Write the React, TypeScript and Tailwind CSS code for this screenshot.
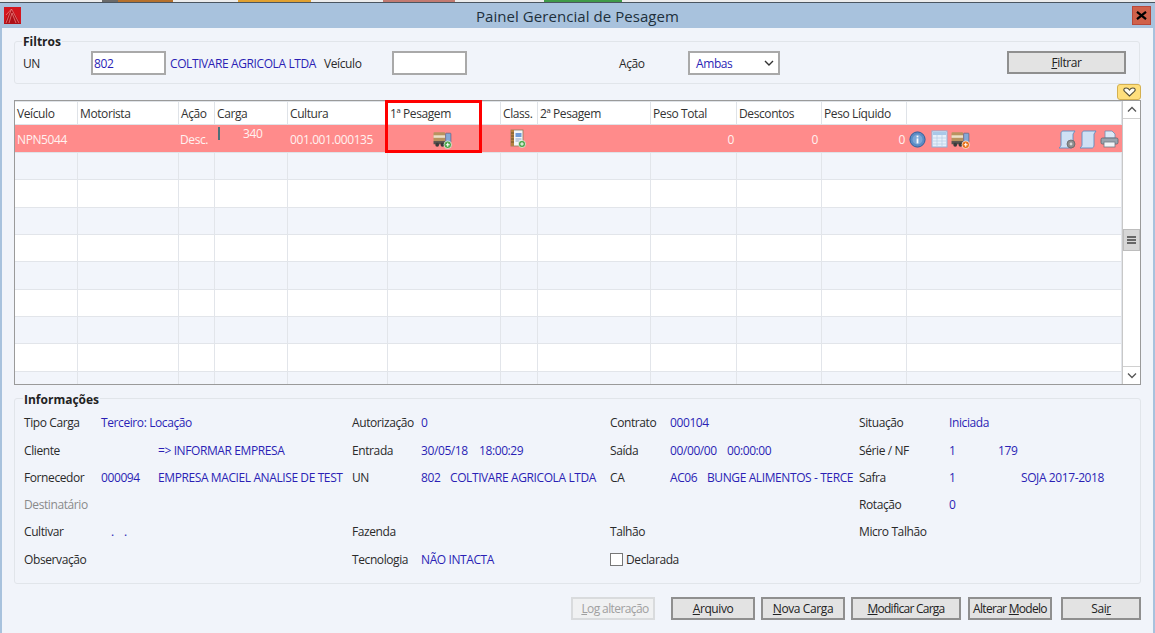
import type { ReactNode } from "react";

const COLS = "grid-cols-[63px_101px_36px_73px_100px_113px_37px_113px_86px_85px_85px_215px]";

const headers = ["Veículo", "Motorista", "Ação", "Carga", "Cultura", "1ª Pesagem", "Class.", "2ª Pesagem", "Peso Total", "Descontos", "Peso Líquido", ""];

function TruckIcon({ badge }: { badge: string }) {
  return (
    <svg width="20" height="19" viewBox="0 0 19 18">
      <rect x="0.5" y="2" width="11" height="9" rx="0.8" fill="#b8935f" />
      <rect x="0.5" y="5" width="11" height="2.4" fill="#ece0c8" />
      <rect x="0.5" y="10.5" width="12" height="3" fill="#55524e" />
      <rect x="12" y="3" width="5" height="9" rx="0.6" fill="#86a8d6" stroke="#4a5f80" strokeWidth="0.6" />
      <circle cx="4" cy="14" r="1.8" fill="#3a3a3a" />
      <circle cx="9" cy="14" r="1.8" fill="#3a3a3a" />
      <circle cx="14" cy="14" r="3.6" fill={badge} stroke="#fff" strokeWidth="0.6" />
      <path d="M12.2 14h3.6M14 12.2v3.6" stroke="#fff" strokeWidth="1" />
    </svg>
  );
}

function ClassIcon() {
  return (
    <svg width="18" height="20" viewBox="0 0 18 20">
      <rect x="2" y="1" width="12" height="16" fill="#f4f6f8" stroke="#8a7a5a" strokeWidth="0.8" />
      <rect x="2" y="1" width="3" height="16" fill="#b5813f" />
      <path d="M2 4h3M2 7h3M2 10h3M2 13h3" stroke="#5e4a28" strokeWidth="0.8" />
      <rect x="6.5" y="4" width="6" height="4" fill="#6f9bd8" />
      <path d="M6.5 10h6M6.5 12h4" stroke="#8ca5c4" strokeWidth="1" />
      <circle cx="13" cy="15" r="3.6" fill="#4da54a" stroke="#fff" strokeWidth="0.6" />
      <path d="M11.2 15h3.6M13 13.2v3.6" stroke="#fff" strokeWidth="1" />
    </svg>
  );
}

function InfoIcon() {
  return (
    <svg width="17" height="17" viewBox="0 0 17 17">
      <circle cx="8.5" cy="8.5" r="7.6" fill="#5b8cc4" stroke="#2f5f9c" strokeWidth="1" />
      <circle cx="8.5" cy="8.5" r="5" fill="#7ba6d6" />
      <rect x="7.6" y="7.4" width="1.8" height="5" fill="#fff" />
      <rect x="7.6" y="4.6" width="1.8" height="1.8" fill="#fff" />
    </svg>
  );
}

function SheetIcon() {
  return (
    <svg width="17" height="18" viewBox="0 0 17 18">
      <rect x="1" y="1" width="15" height="16" fill="#e6f0fa" stroke="#8fb2d8" />
      <rect x="2" y="2" width="13" height="3" fill="#a9c8e8" />
      <path d="M2 8h13M2 11h13M2 14h13M6 5v11M11 5v11" stroke="#b4cce4" strokeWidth="0.7" />
    </svg>
  );
}

function ScrollIcon({ gear }: { gear?: boolean }) {
  return (
    <svg width="18" height="19" viewBox="0 0 18 19">
      <path d="M5 1h12l-2 3v11c0 2-1 3-2 3H1c1-1 2-2 2-3V3c0-1 1-2 2-2z" fill="#cfe0f4" stroke="#5f8cc0" strokeWidth="0.9" />
      {gear && (
        <>
          <circle cx="13" cy="14" r="4" fill="#8d8d8d" stroke="#5e5e5e" strokeWidth="0.7" />
          <circle cx="13" cy="14" r="1.4" fill="#d9d9d9" />
        </>
      )}
    </svg>
  );
}

function PrinterIcon() {
  return (
    <svg width="19" height="18" viewBox="0 0 19 18">
      <path d="M5 1h7l3 3v4H5z" fill="#dce8f5" stroke="#6f8db0" strokeWidth="0.8" />
      <rect x="1" y="8" width="17" height="6" rx="1.5" fill="#9aa4ae" stroke="#5c6670" strokeWidth="0.8" />
      <rect x="4" y="12" width="11" height="5" fill="#f1f4f7" stroke="#6f7a85" strokeWidth="0.8" />
    </svg>
  );
}

function AppLogo() {
  return (
    <svg width="17" height="17" viewBox="0 0 17 17">
      <rect width="17" height="17" fill="#d3161e" />
      <path d="M0 17 7 1l10 16z" fill="#ad1017" />
      <path d="M2 16 7.5 2 15 16M5 16 8 6l4 10M7.5 2 2 8" fill="none" stroke="#f28a8a" strokeWidth="0.7" />
    </svg>
  );
}

function Btn({ children, wide, disabled }: { children: ReactNode; wide: string; disabled?: boolean }) {
  return (
    <div
      className={`${wide} h-[23px] flex items-center justify-center border-2 pt-[1px] ${
        disabled ? "border-[#d9dbdd] bg-[#f0f1f2] text-[#a0a0a0]" : "border-[#8f8f8f] bg-[#e3e3e3] text-[#222]"
      }`}
    >
      {children}
    </div>
  );
}

function Label({ children, muted }: { children?: ReactNode; muted?: boolean }) {
  return <div className={muted ? "text-[#8a8a8a]" : "text-[#2a2a2a]"}>{children}</div>;
}

function Val({ children }: { children?: ReactNode }) {
  return <div className="flex whitespace-nowrap text-[#2b1fb5]">{children}</div>;
}

function InfoRow({ cells }: { cells: ReactNode[] }) {
  return (
    <div className="h-[27.3px] grid grid-cols-[77px_251px_69px_189px_60px_189px_90px_182px] items-center">
      {cells}
    </div>
  );
}

export default function App() {
  return (
    <div className="w-[1155px] h-[633px] overflow-hidden bg-[#f1f4fa] text-[12px] leading-[16px] font-['Open_Sans','Liberation_Sans',sans-serif] tracking-[-0.4px]">
      <div className="h-[3px] flex bg-[#ececec] border-b border-[#4a5560]">
        <div className="ml-[102px] w-[16px] bg-[#6a6a6a]" />
        <div className="w-[55px] bg-[#b5702c]" />
        <div className="ml-[65px] w-[73px] bg-[#e0a030]" />
        <div className="ml-[72px] w-[72px] bg-[#c27a70]" />
        <div className="ml-[89px] w-[78px] bg-[#3f9a48]" />
      </div>
      <div className="h-[25px] bg-[#a8c2dd] flex items-center relative">
        <div className="ml-[4px] flex">
          <AppLogo />
        </div>
        <div className="absolute left-0 right-0 text-center text-[15px] text-[#20303c] tracking-[0.06px]">
          Painel Gerencial de Pesagem
        </div>
        <div className="absolute left-[1132px] top-[3px] w-[19px] h-[19px] bg-[#d0614a] border border-[#b8483a] flex items-center justify-center">
          <svg width="11" height="9" viewBox="0 0 11 9">
            <path d="M1 .8 10 8.2M10 .8 1 8.2" stroke="#000" strokeWidth="2.2" />
          </svg>
        </div>
      </div>

      <div className="border-l-[2px] border-r-[2px] border-[#a8c2dd] pl-[12px] pt-[13px] h-[605px] flex flex-col">
        {/* filtros */}
        <div className="relative w-[1126px] h-[43px] border border-[#e1e5ea] rounded-[3px] flex items-center pl-[8px]">
          <span className="absolute left-[7px] -top-[8px] px-[1px] bg-[#f1f4fa] font-bold text-[#222] tracking-normal">Filtros</span>
          <div className="w-[68px] pt-[2px] text-[#2a2a2a]">UN</div>
          <div className="w-[75px] h-[24px] border-2 border-[#a9a9a9] bg-white flex items-center pl-[1px] pt-[2px] text-[#2b1fb5]">802</div>
          <div className="ml-[4px] w-[154px] pt-[2px] text-[#2b1fb5] whitespace-nowrap">COLTIVARE AGRICOLA LTDA</div>
          <div className="w-[68px] pt-[2px] text-[#2a2a2a]">Veículo</div>
          <div className="w-[75px] h-[24px] border-2 border-[#a9a9a9] bg-white" />
          <div className="ml-[152px] w-[69px] pt-[2px] text-[#2a2a2a]">Ação</div>
          <div className="w-[92px] h-[24px] border-2 border-[#a9a9a9] bg-white flex items-center justify-between pl-[6px] pr-[4px] text-[#2b1fb5]">
            <span className="pt-[2px]">Ambas</span>
            <svg width="10" height="8" viewBox="0 0 10 8">
              <path d="M1 2l4 4 4-4" fill="none" stroke="#333" strokeWidth="1.4" />
            </svg>
          </div>
          <div className="ml-[227px]">
            <Btn wide="w-[119px]">
              <span>
                <u>F</u>iltrar
              </span>
            </Btn>
          </div>
        </div>

        <div className="h-[16px] w-[1127px] flex justify-end">
          <div className="w-[24px] h-[16px] bg-[#ffdf7c] border border-[#d4b050] rounded-[3px] flex items-center justify-center">
            <svg width="13" height="10" viewBox="0 0 12 9">
              <path d="M6 8.2 1.5 4C0 2.5 1 .8 3 .8 4.4.8 5.4 1.6 6 2.6 6.6 1.6 7.6.8 9 .8c2 0 3 1.7 1.5 3.2z" fill="#fffdf4" stroke="#55503a" strokeWidth="1" />
            </svg>
          </div>
        </div>

        {/* grade */}
        <div className="relative w-[1127px] h-[285px] border border-[#9a9a9a] flex">
          <div className="w-[1107px] flex flex-col overflow-hidden">
            <div className={`grid ${COLS} shrink-0 h-[24px] bg-[#dfe3e8] pt-[1px]`}>
              {headers.map((h, i) => (
                <div key={i} className="bg-white mr-[1px] mb-[1px] flex items-center pl-[2px] pt-[1px] text-[#333]">
                  {h}
                </div>
              ))}
            </div>
            <div className={`grid ${COLS} shrink-0 h-[28px] bg-[#ff8b8b] text-[#fff2f0] items-center border-b border-[#dfe3e8]`}>
              <div className="pl-[2px] pt-[3px]">NPN5044</div>
              <div />
              <div className="pl-[1px] pt-[3px]">Desc.</div>
              <div className="h-full flex">
                <div className="ml-[3px] mt-[2px] w-[2px] h-[13px] bg-[#4d7078]" />
                <div className="ml-[23px] mt-[1px]">340</div>
              </div>
              <div className="pl-[2px] pt-[3px]">001.001.000135</div>
              <div className="flex justify-center pr-[3px] pt-[1px]">
                <TruckIcon badge="#4da54a" />
              </div>
              <div className="pl-[8px] pt-[1px]">
                <ClassIcon />
              </div>
              <div />
              <div className="text-right pr-[3px] pt-[3px]">0</div>
              <div className="text-right pr-[4px] pt-[3px]">0</div>
              <div className="text-right pr-[2px] pt-[3px]">0</div>
              <div className="flex items-center pl-[2px] pr-[3px] pt-[1px]">
                <InfoIcon />
                <div className="ml-[5px] flex">
                  <SheetIcon />
                </div>
                <div className="ml-[3px] flex">
                  <TruckIcon badge="#e8701a" />
                </div>
                <div className="ml-auto flex gap-[3px]">
                  <ScrollIcon gear />
                  <ScrollIcon />
                  <PrinterIcon />
                </div>
              </div>
            </div>
            {[0, 1, 2, 3, 4, 5, 6, 7, 8].map((r) => (
              <div
                key={r}
                className={`grid ${COLS} shrink-0 h-[27.35px] border-b border-[#e2e5ea] ${r % 2 === 0 ? "bg-[#f2f5fb]" : "bg-white"}`}
              >
                {headers.map((_, c) => (
                  <div key={c} className="border-r border-[#e2e5ea]" />
                ))}
              </div>
            ))}
          </div>
          <div className="w-[18px] bg-white border-l border-[#c8c8c8] flex flex-col">
            <div className="h-[18px] border-b border-[#d0d0d0] flex items-center justify-center">
              <svg width="10" height="7" viewBox="0 0 10 7">
                <path d="M1 5.5l4-4 4 4" fill="none" stroke="#555" strokeWidth="1.3" />
              </svg>
            </div>
            <div className="flex-1 pt-[110px]">
              <div className="h-[22px] bg-[#d6d6d6] border border-[#bdbdbd] flex flex-col items-center justify-center gap-[1px]">
                <div className="w-[9px] h-[2px] bg-[#666]" />
                <div className="w-[9px] h-[2px] bg-[#666]" />
                <div className="w-[9px] h-[2px] bg-[#666]" />
              </div>
            </div>
            <div className="h-[18px] border-t border-[#d0d0d0] flex items-center justify-center">
              <svg width="10" height="7" viewBox="0 0 10 7">
                <path d="M1 1.5l4 4 4-4" fill="none" stroke="#555" strokeWidth="1.3" />
              </svg>
            </div>
          </div>
          {/* destaque vermelho sobre a coluna */}
          <div className="absolute left-[370px] -top-[1px] w-[97px] h-[53px] border-[3px] border-[#f00]" />
        </div>

        {/* informacoes */}
        <div className="relative mt-[13px] w-[1127px] h-[186px] border border-[#e1e5ea] rounded-[3px] pl-[9px] pt-[10.6px]">
          <span className="absolute left-[8px] -top-[7px] px-[1px] bg-[#f1f4fa] font-bold text-[#222] tracking-normal">Informações</span>
          <InfoRow
            cells={[
              <Label key="a">Tipo Carga</Label>,
              <Val key="b">Terceiro: Locação</Val>,
              <Label key="c">Autorização</Label>,
              <Val key="d">0</Val>,
              <Label key="e">Contrato</Label>,
              <Val key="f">000104</Val>,
              <Label key="g">Situação</Label>,
              <Val key="h">Iniciada</Val>,
            ]}
          />
          <InfoRow
            cells={[
              <Label key="a">Cliente</Label>,
              <Val key="b">
                <span className="ml-[57px]">=&gt; INFORMAR EMPRESA</span>
              </Val>,
              <Label key="c">Entrada</Label>,
              <Val key="d">
                <span className="w-[58px]">30/05/18</span>
                <span>18:00:29</span>
              </Val>,
              <Label key="e">Saída</Label>,
              <Val key="f">
                <span className="w-[57px]">00/00/00</span>
                <span>00:00:00</span>
              </Val>,
              <Label key="g">Série / NF</Label>,
              <Val key="h">
                <span className="w-[49px]">1</span>
                <span>179</span>
              </Val>,
            ]}
          />
          <InfoRow
            cells={[
              <Label key="a">Fornecedor</Label>,
              <Val key="b">
                <span className="w-[57px] shrink-0">000094</span>
                <span>EMPRESA MACIEL ANALISE DE TEST</span>
              </Val>,
              <Label key="c">UN</Label>,
              <Val key="d">
                <span className="w-[29px] shrink-0">802</span>
                <span>COLTIVARE AGRICOLA LTDA</span>
              </Val>,
              <Label key="e">CA</Label>,
              <Val key="f">
                <span className="w-[37px] shrink-0">AC06</span>
                <span>BUNGE ALIMENTOS - TERCE</span>
              </Val>,
              <Label key="g">Safra</Label>,
              <Val key="h">
                <span className="w-[72px]">1</span>
                <span>SOJA 2017-2018</span>
              </Val>,
            ]}
          />
          <InfoRow
            cells={[
              <Label key="a" muted>
                Destinatário
              </Label>,
              <Val key="b" />,
              <Label key="c" />,
              <Val key="d" />,
              <Label key="e" />,
              <Val key="f" />,
              <Label key="g">Rotação</Label>,
              <Val key="h">0</Val>,
            ]}
          />
          <InfoRow
            cells={[
              <Label key="a">Cultivar</Label>,
              <Val key="b">
                <span className="ml-[10px] w-[13px]">.</span>
                <span>.</span>
              </Val>,
              <Label key="c">Fazenda</Label>,
              <Val key="d" />,
              <Label key="e">Talhão</Label>,
              <Val key="f" />,
              <Label key="g">Micro Talhão</Label>,
              <Val key="h" />,
            ]}
          />
          <InfoRow
            cells={[
              <Label key="a">Observação</Label>,
              <Val key="b" />,
              <Label key="c">Tecnologia</Label>,
              <Val key="d">NÃO INTACTA</Val>,
              <div key="e" className="col-span-2 flex items-center text-[#2a2a2a]">
                <div className="w-[13px] h-[13px] border border-[#777] bg-white mr-[3px]" />
                Declarada
              </div>,
              <Label key="g" />,
              <Val key="h" />,
            ]}
          />
        </div>

        {/* botoes */}
        <div className="mt-[13px] w-[1127px] flex justify-end">
          <Btn wide="w-[84px] mr-[16px] pl-[4px] tracking-[-0.6px]" disabled>
            <span>
              <u>L</u>og alteração
            </span>
          </Btn>
          <Btn wide="w-[84px] mr-[6px]">
            <span>
              <u>A</u>rquivo
            </span>
          </Btn>
          <Btn wide="w-[84px] mr-[6px]">
            <span>
              <u>N</u>ova Carga
            </span>
          </Btn>
          <Btn wide="w-[110px] mr-[7px] tracking-[-0.75px]">
            <span>
              <u>M</u>odificar Carga
            </span>
          </Btn>
          <Btn wide="w-[84px] mr-[9px] tracking-[-0.7px]">
            <span>
              Alterar <u>M</u>odelo
            </span>
          </Btn>
          <Btn wide="w-[80px]">
            <span>
              Sai<u>r</u>
            </span>
          </Btn>
        </div>
      </div>
    </div>
  );
}
